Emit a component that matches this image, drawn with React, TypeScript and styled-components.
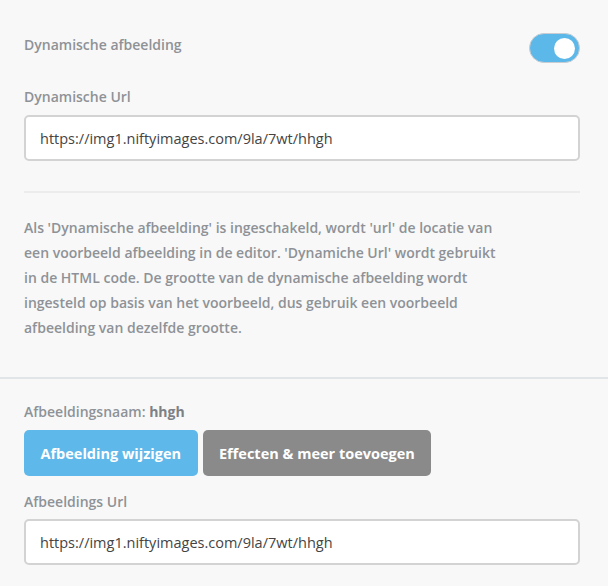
import React from 'react'
import styled, { createGlobalStyle } from 'styled-components'

const Global = createGlobalStyle`
  body {
    margin: 0;
    background: #f8f8f8;
    font-family: "Open Sans", "Noto Sans", sans-serif;
  }
`

const Section = styled.div<{ top: number; bottom: number }>`
  padding: ${(p) => p.top}px 28px ${(p) => p.bottom}px 24px;
  display: flex;
  flex-direction: column;
`

const Row = styled.div`
  display: flex;
  justify-content: space-between;
  align-items: flex-start;
  height: 30px;
`

const Label = styled.div<{ mt?: number }>`
  font-size: 14px;
  line-height: 20px;
  color: #8e9297;
  font-weight: 600;
  margin-top: ${(p) => p.mt || 0}px;
  b {
    color: #7d8186;
    font-weight: 700;
  }
`

const Toggle = styled.div`
  width: 51px;
  height: 30px;
  box-sizing: border-box;
  border-radius: 15px;
  background: #5db8ea;
  border: 1px solid #c9cdd1;
  display: flex;
  justify-content: flex-end;
  align-items: center;
  padding-right: 4px;
`

const Knob = styled.div`
  width: 21px;
  height: 21px;
  border-radius: 50%;
  background: #fff;
`

const Input = styled.input<{ mt: number }>`
  margin-top: ${(p) => p.mt}px;
  height: 46px;
  box-sizing: border-box;
  width: 100%;
  border: 2px solid #d3d3d3;
  border-radius: 5px;
  background: #fff;
  padding: 0 14px;
  font-family: inherit;
  font-size: 14.5px;
  color: #444;
  outline: none;
`

const Divider = styled.hr<{ full?: boolean }>`
  margin: 0;
  border: none;
  height: 2px;
  background: ${(p) => (p.full ? '#e2e5e8' : '#ececec')};
`

const Help = styled.p`
  margin: 22px 0 0;
  font-size: 14px;
  line-height: 25px;
  color: #8e9297;
  font-weight: 600;
  span {
    display: block;
    white-space: nowrap;
  }
`

const Buttons = styled.div`
  display: flex;
  gap: 5px;
  margin-top: 8px;
`

const Button = styled.button<{ tone: 'blue' | 'gray' }>`
  height: 46px;
  padding: 0 16.5px;
  border: none;
  border-radius: 5px;
  background: ${(p) => (p.tone === 'blue' ? '#5fb8ea' : '#8a8a8a')};
  color: #fff;
  font-family: inherit;
  font-size: 14.5px;
  font-weight: 700;
  cursor: pointer;
`

const url = 'https://img1.niftyimages.com/9la/7wt/hhgh'

export default function App() {
  return (
    <>
      <Global />
      <Section top={33} bottom={30}>
        <Row>
          <Label mt={2}>Dynamische afbeelding</Label>
          <Toggle>
            <Knob />
          </Toggle>
        </Row>
        <Label mt={24}>Dynamische Url</Label>
        <Input mt={8} defaultValue={url} />
      </Section>
      <Section top={0} bottom={37}>
        <Divider />
        <Help>
          <span>Als 'Dynamische afbeelding' is ingeschakeld, wordt 'url' de locatie van</span>
          <span>een voorbeeld afbeelding in de editor. 'Dynamiche Url' wordt gebruikt</span>
          <span>in de HTML code. De grootte van de dynamische afbeelding wordt</span>
          <span>ingesteld op basis van het voorbeeld, dus gebruik een voorbeeld</span>
          <span>afbeelding van dezelfde grootte.</span>
        </Help>
      </Section>
      <Divider full />
      <Section top={23} bottom={20}>
        <Label>
          Afbeeldingsnaam: <b>hhgh</b>
        </Label>
        <Buttons>
          <Button tone="blue">Afbeelding wijzigen</Button>
          <Button tone="gray">Effecten &amp; meer toevoegen</Button>
        </Buttons>
        <Label mt={16}>Afbeeldings Url</Label>
        <Input mt={7} defaultValue={url} />
      </Section>
    </>
  )
}
